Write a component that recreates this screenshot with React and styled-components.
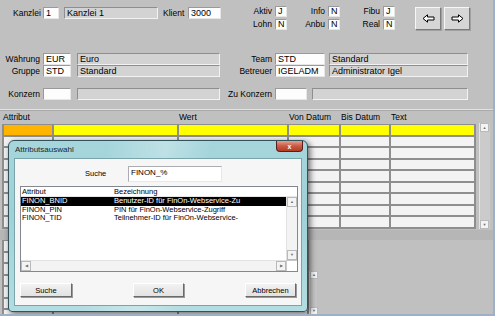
import React from "react";
import styled, { createGlobalStyle } from "styled-components";

const GlobalStyle = createGlobalStyle`
  html, body {
    margin: 0;
    padding: 0;
  }
  body {
    background: #c0c0c0;
    font-family: "Liberation Sans", Arial, sans-serif;
  }
`;

const Window = styled.div`
  position: relative;
  width: 495px;
  height: 316px;
  box-sizing: border-box;
  overflow: hidden;
  background: #c0c0c0;
  border-right: 2px solid #9db0c6;
  border-bottom: 2px solid #9db0c6;
  font-size: 9px;
  color: #000;
`;

const Header = styled.div`
  height: 110px;
  box-sizing: border-box;
  padding-top: 6px;
  border-bottom: 1px solid #e2e2e2;
  box-shadow: 0 1px 0 #a9a9a9;
`;

const TopRow = styled.div`
  display: flex;
  align-items: flex-start;
  height: 25px;
`;

const Group = styled.div`
  display: flex;
  align-items: center;
  margin-left: ${(p) => p.$ml || 0}px;
  margin-top: ${(p) => p.$mt || 0}px;
`;

const Label = styled.span`
  display: inline-block;
  width: ${(p) => (p.$w ? `${p.$w}px` : "auto")};
  text-align: ${(p) => p.$align || "left"};
  margin-left: ${(p) => p.$ml || 0}px;
  margin-right: ${(p) => p.$mr || 0}px;
  white-space: nowrap;
  font-size: 8.5px;
  line-height: 12px;
`;

const Field = styled.div`
  box-sizing: border-box;
  width: ${(p) => p.$w}px;
  height: ${(p) => p.$h || 12}px;
  margin-left: ${(p) => p.$ml || 0}px;
  padding-left: 2px;
  line-height: ${(p) => (p.$h || 12) - 2}px;
  white-space: nowrap;
  overflow: hidden;
  background: ${(p) => (p.$ro ? "#d3d3d3" : "#fdfdfd")};
  border: 1px solid;
  border-color: ${(p) =>
    p.$ro ? "#8e8e8e #f2f2f2 #f2f2f2 #8e8e8e" : "#9a9a9a #e6e6e6 #e6e6e6 #9a9a9a"};
`;

const FlagsGrid = styled.div`
  display: grid;
  grid-template-columns: 27px 12px 35px 12px 37px 12px;
  grid-auto-rows: 11px;
  column-gap: 3px;
  row-gap: 2px;
  margin-left: 24px;
  align-items: center;

  ${Label} {
    line-height: 11px;
  }
`;

const NavButtons = styled.div`
  display: flex;
  gap: 3px;
  margin-left: 20px;
  margin-top: 1px;
`;

const NavButton = styled.div`
  box-sizing: border-box;
  width: 26px;
  height: 23px;
  display: flex;
  align-items: center;
  justify-content: center;
  background: #d6d6d6;
  border: 1px solid;
  border-color: #f6f6f6 #7a7a7a #7a7a7a #f6f6f6;
  box-shadow: 1px 1px 0 #a0a0a0;
`;

const FormBlock = styled.div`
  margin-top: 22px;
`;

const FormRow = styled.div`
  display: flex;
  align-items: center;
  height: 12px;
  margin-top: ${(p) => p.$mt || 0}px;
`;

const GridHead = styled.div`
  display: grid;
  grid-template-columns: 50px 125px 110px 52px 50px 85px;
  height: 13px;
  margin-left: 3px;
  line-height: 13px;
  margin-top: 1px;
  font-size: 8.5px;
`;

const HeadCell = styled.div`
  grid-column: span ${(p) => p.$span || 1};
  padding-left: ${(p) => p.$pl || 0}px;
  white-space: nowrap;
`;

const GridBody = styled.div`
  display: flex;
  align-items: flex-start;
`;

const Table = styled.div`
  margin-left: 2px;
  border-left: 2px solid #8e8e8e;
  border-top: 1px solid #8e8e8e;
`;

const TableRow = styled.div`
  display: grid;
  grid-template-columns: ${(p) => p.$cols};
`;

const Cell = styled.div`
  box-sizing: border-box;
  height: 11.5px;
  background: ${(p) => p.$bg || "#f3f3f3"};
  border-right: 2px solid #8e8e8e;
  border-bottom: 2px solid #8e8e8e;
`;

const VScroll = styled.div`
  box-sizing: border-box;
  width: ${(p) => p.$w || 11}px;
  height: ${(p) => p.$h}px;
  margin-left: ${(p) => p.$ml || 0}px;
  margin-top: ${(p) => p.$mt || 0}px;
  display: flex;
  flex-direction: column;
  justify-content: space-between;
  background: ${(p) => p.$bg || "#cbcbcb"};
  border-left: 1px solid #e4e4e4;
`;

const ScrollBtn = styled.div`
  box-sizing: border-box;
  width: ${(p) => p.$s || 9}px;
  height: ${(p) => p.$s || 9}px;
  display: flex;
  align-items: center;
  justify-content: center;
  background: #f4f4f4;
  border: 1px solid #b9b9b9;
  color: #707070;
  font-size: 4px;
  line-height: 1;
`;

const Band = styled.div`
  height: 10px;
  margin-top: 1px;
  background: #b6b6b6;
`;

const LowerArea = styled.div`
  display: flex;
  align-items: flex-start;
`;

/* dialog */

const Dialog = styled.div`
  position: absolute;
  left: 8px;
  top: 140px;
  width: 300px;
  height: 172px;
  box-sizing: border-box;
  display: flex;
  flex-direction: column;
  padding: 0 5px 5px 5px;
  border: 1px solid #34525c;
  border-radius: 6px 6px 4px 4px;
  background: linear-gradient(
      100deg,
      rgba(255, 255, 255, 0) 30%,
      rgba(255, 255, 255, 0.28) 48%,
      rgba(255, 255, 255, 0) 62%
    ),
    linear-gradient(to bottom, #a6d6dc, #9fd1d7 40%, #b2dde2);
  box-shadow: 2px 2px 6px rgba(0, 0, 0, 0.6);
  font-size: 7.5px;

  ${Label} {
    font-size: 7.5px;
  }
`;

const TitleBar = styled.div`
  display: flex;
  align-items: flex-start;
  height: 17px;
  margin: 0 -5px;
  padding: 0 4px 0 6px;
`;

const Title = styled.span`
  font-size: 8px;
  line-height: 18px;
  color: #16262c;
`;

const CloseBtn = styled.div`
  box-sizing: border-box;
  width: 27px;
  height: 11px;
  margin-left: auto;
  display: flex;
  align-items: center;
  justify-content: center;
  border: 1px solid #5a1c1c;
  border-top: none;
  border-radius: 0 0 4px 4px;
  background: linear-gradient(to bottom, #e1a08e, #c85a45 50%, #b53a25);
  color: #fff;
  font-size: 7px;
  font-weight: bold;
  line-height: 1;
`;

const Client = styled.div`
  flex: 1;
  display: flex;
  flex-direction: column;
  background: #f6f6f6;
  border: 1px solid #7aa4aa;
`;

const SearchRow = styled.div`
  display: flex;
  align-items: center;
  height: 16px;
  margin-top: 7px;
  padding-left: 70px;
`;

const SearchInput = styled.div`
  box-sizing: border-box;
  width: 94px;
  height: 16px;
  padding-left: 2px;
  line-height: 12px;
  font-size: 8px;
  background: #fff;
  border: 1px solid;
  border-color: #abadb3 #e3e9ef #e3e9ef #abadb3;
`;

const ListBox = styled.div`
  box-sizing: border-box;
  width: 278px;
  height: 86px;
  margin: 4px 0 0 5px;
  display: flex;
  flex-direction: column;
  background: #fff;
  border: 1px solid #828790;
`;

const ListHead = styled.div`
  display: grid;
  grid-template-columns: 92px 1fr;
  height: 9px;
  line-height: 9px;
  padding-left: 1px;
  border-bottom: 1px solid #e6e6e6;
`;

const ListMain = styled.div`
  display: flex;
  flex: 1;
`;

const ListRows = styled.div`
  flex: 1;
`;

const ListRow = styled.div`
  display: grid;
  grid-template-columns: 92px 1fr;
  height: 8.5px;
  line-height: 8.5px;
  padding-left: 1px;
  white-space: nowrap;
  overflow: hidden;
  background: ${(p) => (p.$sel ? "#000" : "transparent")};
  color: ${(p) => (p.$sel ? "#fff" : "#000")};
`;

const ListScroll = styled.div`
  box-sizing: border-box;
  width: 11px;
  display: flex;
  flex-direction: column;
  justify-content: space-between;
  background: #f3f3f3;
  border-left: 1px solid #e2e2e2;
`;

const HScrollRow = styled.div`
  display: flex;
  height: 11px;
`;

const HScroll = styled.div`
  flex: 1;
  display: flex;
  justify-content: space-between;
  background: #f3f3f3;
  border-top: 1px solid #e2e2e2;
`;

const Corner = styled.div`
  box-sizing: border-box;
  width: 11px;
  background: #fff;
  border-left: 1px solid #c8c8c8;
  border-top: 1px solid #c8c8c8;
`;

const ButtonRow = styled.div`
  display: flex;
  justify-content: space-between;
  margin: 11px 5px 0 5px;
`;

const DlgButton = styled.div`
  box-sizing: border-box;
  width: ${(p) => p.$w || 51}px;
  height: 14px;
  display: flex;
  align-items: center;
  justify-content: center;
  background: linear-gradient(to bottom, #f2f2f2, #e2e2e2);
  border: 1px solid;
  border-color: #ffffff #6a6a6a #6a6a6a #ffffff;
  box-shadow: 1px 1px 0 #9a9a9a;
  font-size: 7.5px;
`;

const ArrowIcon = ({ dir }) => (
  <svg width="13" height="9" viewBox="0 0 13 9">
    <path
      d={
        dir === "left"
          ? "M1 4.5 L5.5 0.8 V3 H12 V6 H5.5 V8.2 Z"
          : "M12 4.5 L7.5 0.8 V3 H1 V6 H7.5 V8.2 Z"
      }
      fill="#fff"
      stroke="#000"
      strokeWidth="1"
    />
  </svg>
);

const mainCols = [50, 125, 110, 52, 50, 85];
const lowerCols = [50, 125, 130];
const items = [
  ["FINON_BNID", "Benutzer-ID für FinOn-Webservice-Zu"],
  ["FINON_PIN", "PIN für FinOn-Webservice-Zugriff"],
  ["FINON_TID", "Teilnehmer-ID für FinOn-Webservice-"],
];

const App = () => (
  <>
    <GlobalStyle />
    <Window>
      <Header>
        <TopRow>
          <Group $ml={13} $mt={1}>
            <Label $w={30}>Kanzlei</Label>
            <Field $w={16}>1</Field>
            <Field $w={94} $ml={5} $ro>
              Kanzlei 1
            </Field>
            <Label $w={25} $ml={5}>
              Klient
            </Label>
            <Field $w={33}>3000</Field>
          </Group>
          <FlagsGrid>
            <Label $align="right">Aktiv</Label>
            <Field $w={12} $h={11}>J</Field>
            <Label $align="right">Info</Label>
            <Field $w={12} $h={11}>N</Field>
            <Label $align="right">Fibu</Label>
            <Field $w={12} $h={11}>J</Field>
            <Label $align="right">Lohn</Label>
            <Field $w={12} $h={11}>N</Field>
            <Label $align="right">Anbu</Label>
            <Field $w={12} $h={11}>N</Field>
            <Label $align="right">Real</Label>
            <Field $w={12} $h={11}>N</Field>
          </FlagsGrid>
          <NavButtons>
            <NavButton>
              <ArrowIcon dir="left" />
            </NavButton>
            <NavButton>
              <ArrowIcon dir="right" />
            </NavButton>
          </NavButtons>
        </TopRow>
        <FormBlock>
          <FormRow>
            <Label $w={40} $align="right" $mr={3}>
              Währung
            </Label>
            <Field $w={28}>EUR</Field>
            <Field $w={143} $ml={6} $ro>
              Euro
            </Field>
            <Label $w={52} $align="right" $mr={3}>
              Team
            </Label>
            <Field $w={50}>STD</Field>
            <Field $w={139} $ml={4} $ro>
              Standard
            </Field>
          </FormRow>
          <FormRow>
            <Label $w={40} $align="right" $mr={3}>
              Gruppe
            </Label>
            <Field $w={28}>STD</Field>
            <Field $w={143} $ml={6} $ro>
              Standard
            </Field>
            <Label $w={52} $align="right" $mr={3}>
              Betreuer
            </Label>
            <Field $w={50}>IGELADM</Field>
            <Field $w={139} $ml={4} $ro>
              Administrator Igel
            </Field>
          </FormRow>
          <FormRow $mt={11}>
            <Label $w={40} $align="right" $mr={3}>
              Konzern
            </Label>
            <Field $w={28} />
            <Field $w={143} $ml={6} $ro />
            <Label $w={52} $align="right" $mr={3}>
              Zu Konzern
            </Label>
            <Field $w={32} />
            <Field $w={156} $ml={5} $ro />
          </FormRow>
        </FormBlock>
      </Header>

      <GridHead>
        <HeadCell $span={2}>Attribut</HeadCell>
        <HeadCell $pl={1}>Wert</HeadCell>
        <HeadCell $pl={1}>Von Datum</HeadCell>
        <HeadCell $pl={1}>Bis Datum</HeadCell>
        <HeadCell $pl={1}>Text</HeadCell>
      </GridHead>
      <GridBody>
        <Table>
          {Array.from({ length: 9 }).map((_, r) => (
            <TableRow key={r} $cols={mainCols.map((c) => `${c}px`).join(" ")}>
              {mainCols.map((c, i) => (
                <Cell
                  key={i}
                  $bg={r === 0 ? (i === 0 ? "#ffb400" : "#ffff00") : undefined}
                />
              ))}
            </TableRow>
          ))}
        </Table>
        <VScroll $h={106} $ml={3} $mt={-1}>
          <ScrollBtn>▲</ScrollBtn>
          <ScrollBtn>▼</ScrollBtn>
        </VScroll>
      </GridBody>
      <Band />
      <LowerArea>
        <Table>
          {Array.from({ length: 7 }).map((_, r) => (
            <TableRow key={r} $cols={lowerCols.map((c) => `${c}px`).join(" ")}>
              {lowerCols.map((c, i) => (
                <Cell key={i} />
              ))}
            </TableRow>
          ))}
        </Table>
        <VScroll $w={8} $h={44} $mt={31} $bg="#c6c6c6">
          <ScrollBtn $s={8}>▲</ScrollBtn>
          <ScrollBtn $s={8}>▼</ScrollBtn>
        </VScroll>
      </LowerArea>

      <Dialog>
        <TitleBar>
          <Title>Attributsauswahl</Title>
          <CloseBtn>x</CloseBtn>
        </TitleBar>
        <Client>
          <SearchRow>
            <Label $w={43}>Suche</Label>
            <SearchInput>FINON_%</SearchInput>
          </SearchRow>
          <ListBox>
            <ListHead>
              <span>Attribut</span>
              <span>Bezeichnung</span>
            </ListHead>
            <ListMain>
              <ListRows>
                {items.map(([a, b], i) => (
                  <ListRow key={a} $sel={i === 0}>
                    <span>{a}</span>
                    <span>{b}</span>
                  </ListRow>
                ))}
              </ListRows>
              <ListScroll>
                <ScrollBtn $s={10}>▲</ScrollBtn>
                <ScrollBtn $s={10}>▼</ScrollBtn>
              </ListScroll>
            </ListMain>
            <HScrollRow>
              <HScroll>
                <ScrollBtn $s={10}>◀</ScrollBtn>
                <ScrollBtn $s={10}>▶</ScrollBtn>
              </HScroll>
              <Corner />
            </HScrollRow>
          </ListBox>
          <ButtonRow>
            <DlgButton $w={52}>Suche</DlgButton>
            <DlgButton>OK</DlgButton>
            <DlgButton>Abbrechen</DlgButton>
          </ButtonRow>
        </Client>
      </Dialog>
    </Window>
  </>
);

export default App;
